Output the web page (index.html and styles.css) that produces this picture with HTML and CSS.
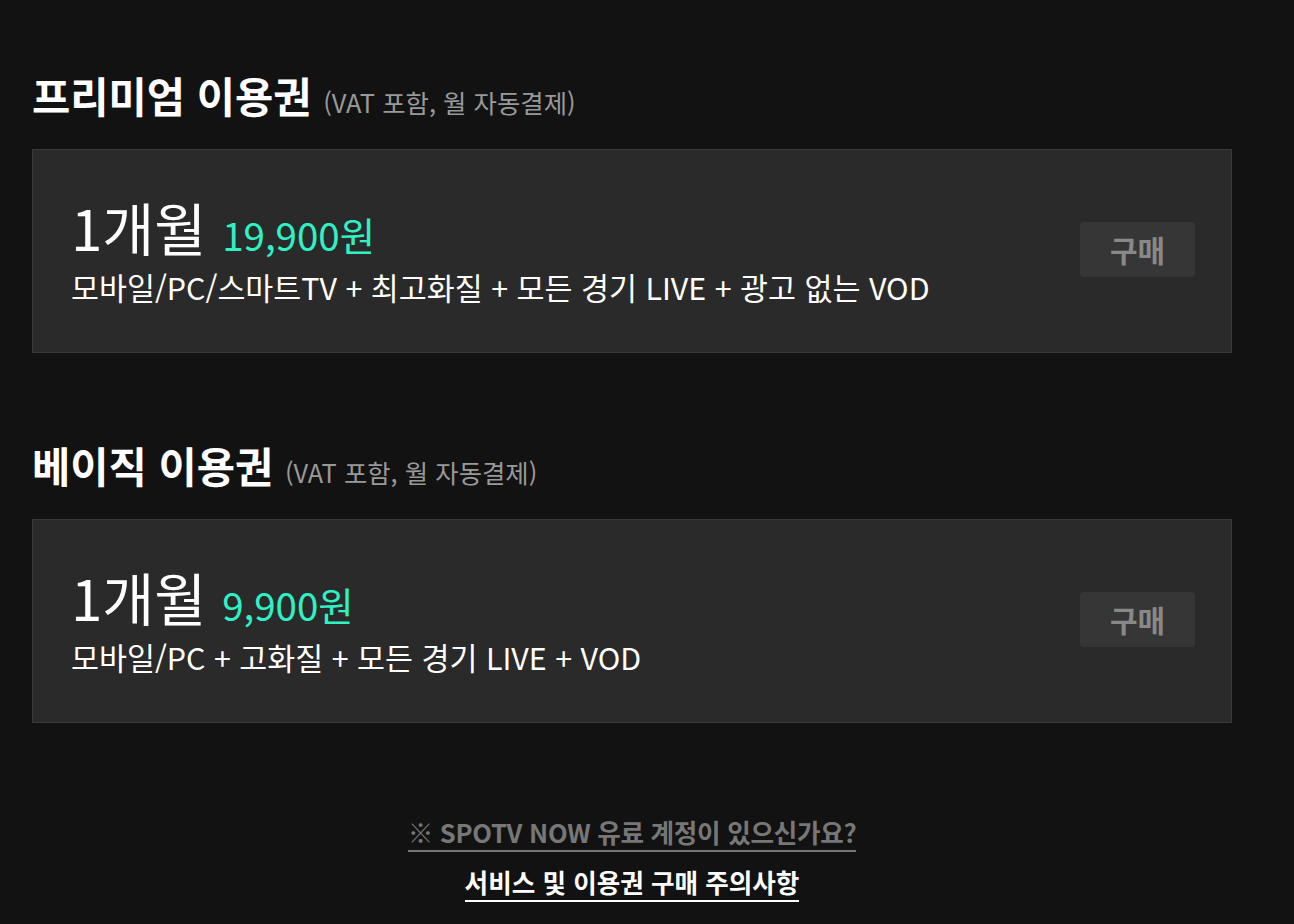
FILE: index.html
```html
<!DOCTYPE html>
<html lang="ko">
<head>
    <meta charset="UTF-8">
    <meta name="viewport" content="width=device-width, initial-scale=1.0">
    <title>이용권 구매</title>
    <link rel="stylesheet" href="styles.css">
</head>
<body>
    <div class="wrap">
        <section class="plan">
            <h2 class="plan_title">프리미엄 이용권 <span class="plan_sub">(VAT 포함, 월 자동결제)</span></h2>
            <div class="card">
                <div class="card_info">
                    <p class="card_period">1개월 <span class="card_price">19,900원</span></p>
                    <p class="card_desc">모바일/PC/스마트TV + 최고화질 + 모든 경기 LIVE + 광고 없는 VOD</p>
                </div>
                <button type="button" class="buy_btn">구매</button>
            </div>
        </section>

        <section class="plan">
            <h2 class="plan_title">베이직 이용권 <span class="plan_sub">(VAT 포함, 월 자동결제)</span></h2>
            <div class="card">
                <div class="card_info">
                    <p class="card_period">1개월 <span class="card_price">9,900원</span></p>
                    <p class="card_desc">모바일/PC + 고화질 + 모든 경기 LIVE + VOD</p>
                </div>
                <button type="button" class="buy_btn">구매</button>
            </div>
        </section>

        <div class="links">
            <a href="#" class="link_gray">※ SPOTV NOW 유료 계정이 있으신가요?</a>
            <a href="#" class="link_white">서비스 및 이용권 구매 주의사항</a>
        </div>
    </div>
</body>
</html>
```

FILE: styles.css
```css
*{margin:0;padding:0;box-sizing:border-box;}
body{background:#121212;color:#fff;font-family:"Noto Sans CJK KR","Noto Sans",sans-serif;}
.wrap{width:1200px;margin-left:32px;padding-top:65px;}
.plan{margin-bottom:82px;}
.plan_title{font-size:41.6px;font-weight:700;line-height:60px;}
.plan_sub{font-size:25.4px;font-weight:400;color:#999;}
.card{display:flex;align-items:center;justify-content:space-between;margin-top:17px;height:204px;padding:0 36px 4px 38px;background:#2a2a2a;border:1px solid #3a3a3a;}
.card_period{font-size:56.5px;font-weight:400;line-height:68px;}
.card_price{font-size:38.5px;color:#2ff2c4;}
.card_desc{font-size:30.4px;line-height:38px;}
.buy_btn{width:115px;height:55px;border:none;border-radius:4px;background:#363636;color:#888;font-family:inherit;font-size:30px;font-weight:700;cursor:pointer;}
.links{display:flex;flex-direction:column;align-items:center;gap:12px;padding-top:9px;}
.links a{font-size:25.6px;font-weight:700;text-decoration:none;line-height:36px;border-bottom:2px solid;}
.link_gray{color:#777;font-size:23.6px;letter-spacing:-0.3px;}
.link_white{color:#fff;}
```
